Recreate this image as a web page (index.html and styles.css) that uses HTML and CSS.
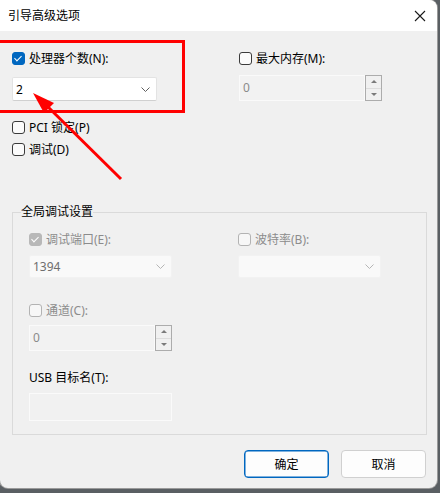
FILE: index.html
```html
<!DOCTYPE html>
<html lang="zh-CN">
<head>
    <meta charset="UTF-8">
    <meta name="viewport" content="width=device-width, initial-scale=1.0">
    <title>引导高级选项</title>
    <link rel="stylesheet" href="styles.css">
</head>
<body>

    <div class="dialog">
        <!-- Barra de título -->
        <div class="titlebar">
            <span>引导高级选项</span>
            <svg class="close" width="12" height="12" viewBox="0 0 12 12">
                <path d="M1 1 L11 11 M11 1 L1 11" stroke="#1a1a1a" stroke-width="1.1" fill="none"/>
            </svg>
        </div>

        <div class="content">
            <div class="top-grid">
                <div>
                    <div class="check-row">
                        <span class="check checked"></span>
                        <span>处理器个数(N):</span>
                    </div>
                    <div class="combo combo-cpu">
                        <span>2</span>
                        <svg class="chevron" width="9" height="5" viewBox="0 0 9 5"><path d="M0.5 0.5 L4.5 4.5 L8.5 0.5" stroke="#5f5f5f" fill="none"/></svg>
                    </div>
                </div>
                <div>
                    <div class="check-row">
                        <span class="check"></span>
                        <span>最大内存(M):</span>
                    </div>
                    <div class="spin spin-mem">
                        <div class="spin-field">0</div>
                        <div class="spin-buttons">
                            <span class="arrow-up"></span>
                            <span class="arrow-down"></span>
                        </div>
                    </div>
                </div>
            </div>

            <div class="check-row pci">
                <span class="check"></span>
                <span>PCI 锁定(P)</span>
            </div>
            <div class="check-row debug">
                <span class="check"></span>
                <span>调试(D)</span>
            </div>

            <fieldset class="group">
                <legend>全局调试设置</legend>

                <div class="group-grid">
                    <div>
                        <div class="check-row disabled">
                            <span class="check checked"></span>
                            <span>调试端口(E):</span>
                        </div>
                        <div class="combo combo-off">
                            <span>1394</span>
                            <svg class="chevron" width="9" height="5" viewBox="0 0 9 5"><path d="M0.5 0.5 L4.5 4.5 L8.5 0.5" stroke="#b5b5b5" fill="none"/></svg>
                        </div>
                    </div>
                    <div>
                        <div class="check-row disabled">
                            <span class="check"></span>
                            <span>波特率(B):</span>
                        </div>
                        <div class="combo combo-off">
                            <span></span>
                            <svg class="chevron" width="9" height="5" viewBox="0 0 9 5"><path d="M0.5 0.5 L4.5 4.5 L8.5 0.5" stroke="#b5b5b5" fill="none"/></svg>
                        </div>
                    </div>
                </div>

                <div class="check-row disabled channel">
                    <span class="check"></span>
                    <span>通道(C):</span>
                </div>
                <div class="spin spin-channel">
                    <div class="spin-field">0</div>
                    <div class="spin-buttons">
                        <span class="arrow-up"></span>
                        <span class="arrow-down"></span>
                    </div>
                </div>

                <div class="usb-label">USB 目标名(T):</div>
                <div class="textbox"></div>
            </fieldset>

            <div class="buttons">
                <button class="btn btn-primary">确定</button>
                <button class="btn">取消</button>
            </div>
        </div>

        <!-- Marcação em vermelho -->
        <div class="highlight"></div>
        <svg class="pointer" width="437" height="488" viewBox="0 0 437 488">
            <line x1="121" y1="179" x2="44" y2="103" stroke="#f00" stroke-width="3"/>
            <polygon points="33,93 54,103 44,113" fill="#f00"/>
        </svg>
    </div>

</body>
</html>
```

FILE: styles.css
```css
body {
    margin: 0;
    padding: 0;
    width: 440px;
    height: 493px;
    background-color: #5a5f63;
    font-family: "Noto Sans", "Noto Sans CJK SC", sans-serif;
    font-size: 12px;
    color: #000;
    overflow: hidden;
}

.dialog {
    position: relative;
    width: 437px;
    height: 488px;
    background-color: #f0f0f0;
    border-radius: 0 8px 8px 8px;
    box-shadow: 0 0 0 1px #9a9a9a;
    overflow: hidden;
}

.titlebar {
    height: 31px;
    background-color: #fff;
    display: flex;
    align-items: center;
    justify-content: space-between;
    padding: 0 8px 0 8px;
    line-height: 14px;
}

.close {
    margin-right: 3px;
}

.content {
    padding: 0 11px 0 12px;
}

/* Caixas de seleção */
.check-row {
    display: flex;
    align-items: center;
    gap: 4px;
    height: 13px;
    line-height: 14px;
    white-space: nowrap;
}

.check {
    box-sizing: border-box;
    width: 13px;
    height: 13px;
    border: 1px solid #3b3b3b;
    border-radius: 3px;
    background-color: #fbfbfb;
    position: relative;
    flex: none;
}

.check.checked {
    background-color: #0067c0;
    border-color: #0067c0;
}

.check.checked::after {
    content: "";
    position: absolute;
    left: 3px;
    top: 1px;
    width: 3px;
    height: 6px;
    border: solid #fff;
    border-width: 0 1.5px 1.5px 0;
    transform: rotate(45deg);
}

.disabled {
    color: #8c8c8c;
}

.disabled .check {
    border-color: #b3b3b3;
    background-color: #f7f7f7;
}

.disabled .check.checked {
    background-color: #b8b8b8;
    border-color: #b8b8b8;
}

.top-grid {
    display: grid;
    grid-template-columns: 227px 144px;
    margin-top: 21px;
}

/* Listas suspensas */
.combo {
    box-sizing: border-box;
    height: 23px;
    display: flex;
    align-items: center;
    justify-content: space-between;
    padding: 0 6px 0 3px;
    border-radius: 2px;
}

.combo-cpu {
    width: 145px;
    height: 24px;
    margin-top: 12px;
    background-color: #fff;
    border: 1px solid #e3e3e3;
    border-bottom-color: #d0d0d0;
}

.combo-off {
    width: 143px;
    margin-top: 9px;
    background-color: #f9f9f9;
    border: 1px solid #f2f2f2;
    color: #6e6e6e;
}

/* Campo numérico */
.spin {
    display: flex;
    width: 143px;
    height: 26px;
}

.spin-mem {
    margin-top: 10px;
}

.spin-channel {
    margin-top: 8px;
}

.spin-field {
    flex: 1;
    box-sizing: border-box;
    border: 1px solid #fafafa;
    background-color: #f2f2f2;
    color: #8a8a8a;
    padding: 0 3px;
    line-height: 24px;
}

.spin-buttons {
    box-sizing: border-box;
    width: 17px;
    border: 1px solid #acacac;
    display: flex;
    flex-direction: column;
    background-color: #f0f0f0;
}

.spin-buttons span {
    flex: 1;
    display: flex;
    align-items: center;
    justify-content: center;
}

.spin-buttons .arrow-up {
    border-bottom: 1px solid #dcdcdc;
}

.arrow-up::before,
.arrow-down::before {
    content: "";
    border-left: 3px solid transparent;
    border-right: 3px solid transparent;
}

.arrow-up::before {
    border-bottom: 3px solid #7a7a7a;
}

.arrow-down::before {
    border-top: 3px solid #7a7a7a;
}

.pci {
    margin-top: 20px;
}

.debug {
    margin-top: 9px;
}

/* Grupo de configurações */
.group {
    box-sizing: border-box;
    width: 415px;
    height: 230px;
    margin: 49px 0 0 0;
    padding: 14px 0 0 16px;
    border: 1px solid #dadada;
}

.group legend {
    padding: 0;
    margin-left: -8px;
    line-height: 14px;
}

.group-grid {
    display: grid;
    grid-template-columns: 209px 144px;
}

.channel {
    margin-top: 26px;
}

.usb-label {
    margin-top: 20px;
    height: 14px;
    line-height: 14px;
}

.textbox {
    box-sizing: border-box;
    width: 143px;
    height: 28px;
    margin-top: 8px;
    border: 1px solid #fafafa;
    background-color: #f1f1f1;
}

/* Botões */
.buttons {
    display: flex;
    justify-content: flex-end;
    gap: 12px;
    margin-top: 15px;
}

.btn {
    box-sizing: border-box;
    width: 85px;
    height: 28px;
    font-family: inherit;
    font-size: 12px;
    color: #000;
    background-color: #fdfdfd;
    border: 1px solid #d0d0d0;
    border-radius: 4px;
    padding: 0;
}

.btn-primary {
    border: 1px solid #0067c0;
    box-shadow: inset 0 0 0 0.5px #0067c0;
}

.highlight {
    position: absolute;
    left: -4px;
    top: 40px;
    width: 183px;
    height: 67px;
    border: 3px solid #f00;
}

.pointer {
    position: absolute;
    left: 0;
    top: 0;
    pointer-events: none;
}
```
